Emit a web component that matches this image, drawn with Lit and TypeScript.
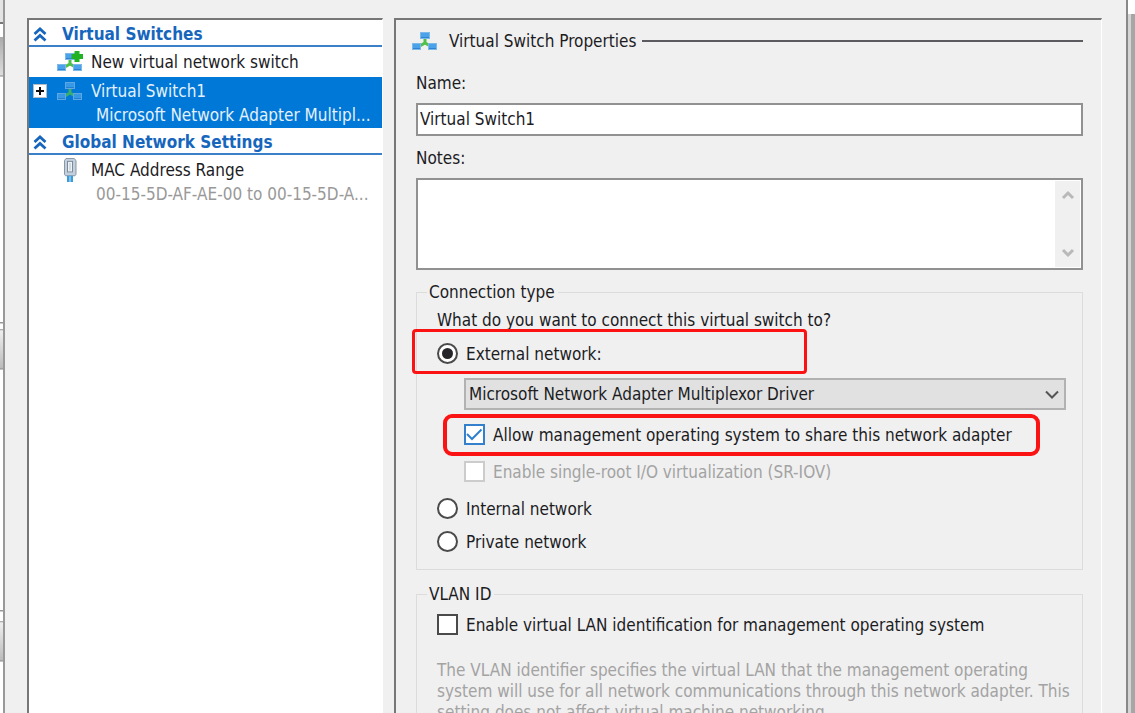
import { LitElement, html, css, svg } from "lit";
import { customElement, property, state } from "lit/decorators.js";

const switchIcon = (withPlus = false) => html`
  <svg class="icon" width="26" height="22" viewBox="0 0 26 22" aria-hidden="true">
    ${svg`
      <path d="M13 8v6M6 17l7-4 7 4" fill="none" stroke="#4fc04a" stroke-width="3"/>
      <rect x="8.500" y="2.500" width="9" height="6" fill="#4aa3ea" stroke="#7db9e8"/>
      <rect x="0.500" y="13.500" width="8" height="6" fill="#4aa3ea" stroke="#7db9e8"/>
      <rect x="16.500" y="13.500" width="8" height="6" fill="#4aa3ea" stroke="#7db9e8"/>
      <path d="M9 7.500h8M1 18.500h7M17 18.500h7" stroke="#2f83cf"/>
      ${withPlus
        ? svg`<path d="M17.500 0h5v3h3.500v5h-3.500v3h-5v-3h-3v-5h3z" fill="#21b324"/>`
        : null}
    `}
  </svg>
`;

const adapterIcon = html`
  <svg class="icon" width="26" height="24" viewBox="0 0 26 25" preserveAspectRatio="none" aria-hidden="true">
    <path d="M7.500 2.500l1.500-2h8l2 2v14.500l-1 1.500h-9.500l-1-1.500z" fill="#c3d0dd" stroke="#8795a5" />
    <rect x="10.500" y="3.500" width="5" height="11" fill="#eef3f8" stroke="#7d8a98" />
    <path d="M13 5v8" stroke="#b4bfca" />
    <rect x="10" y="18.500" width="6" height="6.500" fill="#3e9bd6" />
    <path d="M13 19v6" stroke="#7cc4ee" stroke-width="2" />
  </svg>
`;

const base = css`
  * {
    box-sizing: border-box;
  }
  button,
  input,
  select,
  textarea {
    font: inherit;
    color: inherit;
    margin: 0;
    border-radius: 0;
  }
  .icon {
    display: block;
    flex: none;
  }
`;

@customElement("switch-tree")
export class SwitchTree extends LitElement {
  static styles = [
    base,
    css`
      :host {
        display: block;
        background: #fff;
        border-top: 2px solid #777;
        border-left: 2px solid #777;
        border-right: 1px solid #fff;
      }
      .head {
        display: flex;
        align-items: center;
        gap: 14px;
        width: 100%;
        height: 27px;
        padding: 3px 0 0 4px;
        border: 0;
        border-bottom: 2px solid #3c7fc9;
        background: none;
        color: #1766bd;
        font-weight: bold;
        line-height: 20px;
        text-align: left;
      }
      .chevrons {
        display: block;
        flex: none;
      }
      .item {
        display: grid;
        grid-template-columns: 20px 26px 1fr;
        column-gap: 4px;
        align-items: center;
        padding: 3px 0;
        line-height: 24px;
        white-space: nowrap;
      }
      .icon {
        grid-column: 2;
      }
      .name {
        padding-left: 4px;
      }
      .detail {
        grid-column: 3;
        padding-left: 9px;
        color: #999;
      }
      .item {
        padding-left: 4px;
      }
      .selected {
        padding-top: 2px;
        padding-bottom: 1px;
        background: #0078d7;
        color: #e4f1fc;
      }
      .selected .icon {
        opacity: 0.75;
      }
      .selected .detail {
        color: inherit;
      }
      .expand {
        width: 14px;
        height: 14px;
        padding: 0;
        border: 1px solid #b8bcc2;
        background: #fff;
        display: grid;
        place-items: center;
      }
    `,
  ];

  private head(label: string) {
    return html`
      <button class="head">
        <svg class="chevrons" width="15" height="15" viewBox="0 0 15 15" aria-hidden="true">
          <path d="M1.500 7l5.500-5 5.500 5M1.500 13.500l5.500-5 5.500 5" fill="none" stroke="#1766bd" stroke-width="2.800" />
        </svg>
        <span>${label}</span>
      </button>
    `;
  }

  render() {
    return html`
      ${this.head("Virtual Switches")}
      <div class="item">
        ${switchIcon(true)}
        <span class="name">New virtual network switch</span>
      </div>
      <div class="item selected">
        <button class="expand" aria-label="Expand">
          <svg width="10" height="10" viewBox="0 0 10 10"><path d="M5 1v8M1 5h8" stroke="#111" stroke-width="2" /></svg>
        </button>
        ${switchIcon()}
        <span class="name">Virtual Switch1</span>
        <span class="detail">Microsoft Network Adapter Multipl...</span>
      </div>
      ${this.head("Global Network Settings")}
      <div class="item">
        ${adapterIcon}
        <span class="name">MAC Address Range</span>
        <span class="detail">00-15-5D-AF-AE-00 to 00-15-5D-A...</span>
      </div>
    `;
  }
}

@customElement("switch-properties")
export class SwitchProperties extends LitElement {
  @property() name = "Virtual Switch1";
  @state() private connection = "external";

  static styles = [
    base,
    css`
      :host {
        display: block;
        padding: 10px 18px 0 20px;
        border-top: 2px solid #777;
        border-left: 2px solid #777;
        border-right: 1px solid #fff;
        line-height: 20px;
      }
      .title {
        display: flex;
        align-items: center;
        margin: 0 0 21px -4px;
      }
      .title h1 {
        margin: 0 6px 0 11px;
        font: inherit;
      }
      .rule {
        flex: 1;
        height: 2px;
        background: #5c5c60;
      }
      .label {
        display: block;
        margin-bottom: 10px;
      }
      .text {
        display: block;
        width: 100%;
        height: 33px;
        margin-bottom: 12px;
        padding: 0 2px 2px;
        border: 2px solid #919191;
        background: #fff;
      }
      .notes {
        display: flex;
        height: 92px;
        margin-bottom: 12px;
        padding: 1px;
        border: 2px solid #919191;
        background: #fff;
      }
      .notes textarea {
        flex: 1;
        border: 0;
        padding: 2px;
        outline: 0;
        resize: none;
        background: none;
      }
      .scroll {
        display: flex;
        flex-direction: column;
        justify-content: space-between;
        width: 25px;
        background: #f0f0f0;
      }
      .scroll button {
        display: grid;
        place-items: center;
        height: 28px;
        padding: 0;
        border: 0;
        background: none;
      }
      fieldset {
        min-width: 0;
        margin: 0 0 14px;
        padding: 8px 8px 17px 20px;
        border: 1px solid #dcdcdc;
      }
      legend {
        margin-left: -10px;
        padding: 0 3px 0 2px;
      }
      p {
        margin: 0;
      }
      .choice {
        position: relative;
        display: flex;
        align-items: center;
        height: 21px;
      }
      .choice label {
        padding-left: 8px;
        white-space: nowrap;
      }
      .first {
        margin-top: 13px;
      }
      .top {
        margin-top: 2px;
      }
      .nested {
        margin: 14px 8px 0 27px;
      }
      .spaced,
      .nested.spaced {
        margin-top: 16px;
      }
      .next {
        margin-top: 12px;
      }
      .choice input {
        appearance: none;
        flex: none;
        display: grid;
        place-items: center;
        width: 21px;
        height: 21px;
        border: 2px solid #4a4a4a;
        background: #fff;
      }
      .choice input[type="radio"] {
        border-radius: 50%;
      }
      .choice input[type="radio"]:checked::before {
        content: "";
        width: 11px;
        height: 11px;
        border-radius: 50%;
        background: #26262a;
      }
      .choice .blue {
        border-color: #3580cc;
      }
      .choice .blue:checked {
        background: #fff
          url("data:image/svg+xml,%3Csvg xmlns='http://www.w3.org/2000/svg' viewBox='0 0 17 17'%3E%3Cpath d='M1 8l5 5L15.500 3.500' fill='none' stroke='%232f80cf' stroke-width='2'/%3E%3C/svg%3E");
      }
      .choice input:disabled {
        border-color: #ccc;
      }
      .choice input:disabled + label,
      .hint {
        color: #a3a3a3;
      }
      .pick {
        position: relative;
        display: block;
      }
      .pick select {
        appearance: none;
        display: block;
        width: 100%;
        height: 32px;
        padding: 0 30px 0 3px;
        border: 2px solid #b2b2b2;
        background: #e1e1e1;
      }
      .pick svg {
        position: absolute;
        right: 7px;
        top: 12px;
        pointer-events: none;
      }
      .mark {
        position: absolute;
        pointer-events: none;
        border: 3px solid #fb1212;
        border-radius: 4px;
      }
      .mark-network {
        left: -25px;
        top: -14px;
        width: 395px;
        height: 45px;
      }
      .mark-share {
        left: -21px;
        top: -10px;
        width: 597px;
        height: 42px;
        border-width: 4px;
        border-radius: 9px;
      }
      .hint {
        margin-top: 25px;
        line-height: 21px;
      }
    `,
  ];

  private radio(value: string, label: string, cls: string, mark: unknown = null) {
    return html`
      <div class="choice ${cls}">
        <input
          type="radio"
          name="connection"
          id=${value}
          .checked=${this.connection === value}
          @change=${() => (this.connection = value)}
        />
        <label for=${value}>${label}</label>
        ${mark}
      </div>
    `;
  }

  render() {
    return html`
      <div class="title">
        ${switchIcon()}
        <h1>Virtual Switch Properties</h1>
        <div class="rule"></div>
      </div>
      <label class="label" for="name">Name:</label>
      <input class="text" id="name" type="text" .value=${this.name} />
      <label class="label" for="notes">Notes:</label>
      <div class="notes">
        <textarea id="notes"></textarea>
        <div class="scroll">
          <button aria-label="Scroll up">
            <svg width="14" height="10" viewBox="0 0 14 10"><path d="M2 8l5-5 5 5" fill="none" stroke="#b9b9b9" stroke-width="3" /></svg>
          </button>
          <button aria-label="Scroll down">
            <svg width="14" height="10" viewBox="0 0 14 10"><path d="M2 2l5 5 5-5" fill="none" stroke="#b9b9b9" stroke-width="3" /></svg>
          </button>
        </div>
      </div>
      <fieldset>
        <legend>Connection type</legend>
        <p>What do you want to connect this virtual switch to?</p>
        ${this.radio("external", "External network:", "first", html`<span class="mark mark-network"></span>`)}
        <div class="nested pick">
          <select aria-label="Network adapter">
            <option>Microsoft Network Adapter Multiplexor Driver</option>
          </select>
          <svg width="14" height="10" viewBox="0 0 14 10" aria-hidden="true">
            <path d="M1 1.500l6 6 6-6" fill="none" stroke="#555" stroke-width="2" />
          </svg>
        </div>
        <div class="choice nested">
          <input class="blue" type="checkbox" id="share" checked />
          <label for="share">Allow management operating system to share this network adapter</label>
          <span class="mark mark-share"></span>
        </div>
        <div class="choice nested spaced">
          <input type="checkbox" id="sriov" disabled />
          <label for="sriov">Enable single-root I/O virtualization (SR-IOV)</label>
        </div>
        ${this.radio("internal", "Internal network", "spaced")}
        ${this.radio("private", "Private network", "next")}
      </fieldset>
      <fieldset>
        <legend>VLAN ID</legend>
        <div class="choice top">
          <input type="checkbox" id="vlan" />
          <label for="vlan">Enable virtual LAN identification for management operating system</label>
        </div>
        <p class="hint">
          The VLAN identifier specifies the virtual LAN that the management operating system will use for all network
          communications through this network adapter. This setting does not affect virtual machine networking.
        </p>
      </fieldset>
    `;
  }
}

@customElement("app-root")
export class AppRoot extends LitElement {
  static styles = [
    base,
    css`
      :host {
        display: grid;
        grid-template-columns: 3px 1fr 7px;
        height: 100vh;
        overflow: hidden;
        background: #fff;
        color: #1c1c1f;
        font-family: "DejaVu Sans Condensed", "Noto Sans", sans-serif;
        font-size: 17px;
      }
      .behind-left {
        background: linear-gradient(#e4e4e4, #e4e4e4 22px, #777 22px, #777 24px, #fff 24px, #fff 37px, #aaa 37px, #ddd 75px, #888 76px, #fff 77px, #fff 322px, #999 322px, #999 323px, #fff 324px, #fff 329px, #999 329px, #eee 331px, #bbb 368px, #888 369px, #fff 370px, #fff 610px, #999 610px, #999 611px, #fff 612px, #fff 621px, #999 621px, #eee 623px, #bbb 660px, #888 661px, #fff 662px);
      }
      .behind-right {
        margin-top: 14px;
        border-left: 3px solid #d4d4d4;
        background: #a6a6a6;
      }
      .dialog {
        display: grid;
        grid-template-columns: minmax(0, 356fr) minmax(0, 708fr);
        column-gap: 11px;
        min-height: 0;
        overflow: hidden;
        padding: 18px 24px 0 22px;
        border-left: 2px solid #999;
        border-right: 2px solid #888;
        background: #f0f0f0;
      }
    `,
  ];

  render() {
    return html`
      <div class="behind-left"></div>
      <main class="dialog">
        <switch-tree></switch-tree>
        <switch-properties></switch-properties>
      </main>
      <div class="behind-right"></div>
    `;
  }
}
